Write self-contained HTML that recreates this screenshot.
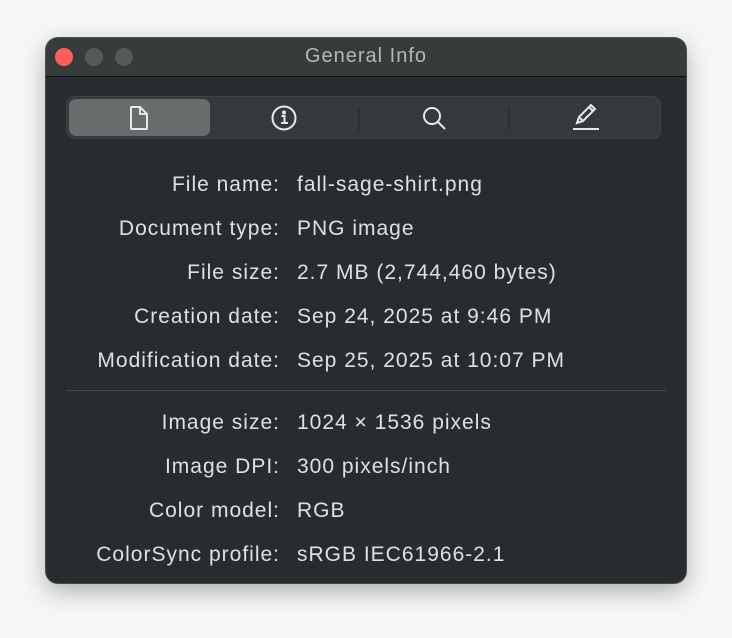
<!DOCTYPE html>
<html><head><style>
body{margin:0;width:732px;height:638px;background:#f6f6f6;font-family:"Liberation Sans",sans-serif;overflow:hidden;position:relative}
.win{position:absolute;left:46px;top:38px;width:640px;height:545px;border-radius:12px;background:#272d2f;box-shadow:0 8px 24px rgba(0,0,0,.3),0 0 0 1px #555b5c;overflow:hidden}
.tb{position:absolute;left:0;top:0;width:640px;height:38px;background:#363b3c;border-bottom:1px solid #0d0f10}
.dot{position:absolute;top:10px;width:18px;height:18px;border-radius:50%;background:#54595a}
.title{position:absolute;left:0;right:0;top:7px;text-align:center;color:#b5b8b8;font-size:20px;letter-spacing:1px}
.seg{position:absolute;left:20px;top:58px;width:593px;height:41px;border-radius:9px;background:#343a3b;border:1px solid #3f4546}
.sel{position:absolute;left:2px;top:2px;width:141px;height:37px;border-radius:7px;background:#676c6c}
.sep{position:absolute;top:11px;width:2px;height:22px;background:#2a2f30}
.row{position:absolute;left:0;width:640px;font-size:21px;letter-spacing:1px;color:#dfe1e1;height:24px}
.l{position:absolute;right:406px;text-align:right;white-space:nowrap}
.v{position:absolute;left:251px;white-space:nowrap}
svg{position:absolute}
</style></head><body>
<div class="win">
<div class="tb">
<div class="dot" style="left:9px;background:#fe5f57"></div>
<div class="dot" style="left:39px"></div>
<div class="dot" style="left:69px"></div>
<div class="title">General Info</div>
</div>
<div class="seg">
<div class="sel"></div>
<div class="sep" style="left:291px"></div>
<div class="sep" style="left:441px"></div>
<svg style="left:60px;top:8px" width="24" height="26" viewBox="0 0 24 26" fill="none" stroke="#e8e8e8" stroke-width="2"><path d="M4 2h9l7 7v14a1 1 0 0 1-1 1H5a1 1 0 0 1-1-1V3a1 1 0 0 1 1-1z M13 2v7h7"/></svg>
<svg style="left:204px;top:8px" width="26" height="26" viewBox="0 0 26 26" fill="none" stroke="#e8e8e8" stroke-width="2"><circle cx="13" cy="13" r="11.5"/><path d="M10.5 11h3v7M10 18h7"/><circle cx="13" cy="7.5" r="1" fill="#e8e8e8"/></svg>
<svg style="left:354px;top:8px" width="28" height="28" viewBox="0 0 28 28" fill="none" stroke="#e8e8e8" stroke-width="2"><circle cx="11" cy="11" r="8"/><path d="M17 17l7 7"/></svg>
<svg style="left:504px;top:7px" width="30" height="28" viewBox="0 0 30 28" fill="none" stroke="#e8e8e8" stroke-width="2"><path d="M6 19l2-6 12-12 4 4-12 12z M8 13l4 4 M18 3l4 4"/><path d="M2 25h26" stroke-width="2"/></svg>
</div>
<div class="row" style="top:135px"><span class="l">File name:</span><span class="v">fall-sage-shirt.png</span></div>
<div class="row" style="top:179px"><span class="l">Document type:</span><span class="v">PNG image</span></div>
<div class="row" style="top:223px"><span class="l">File size:</span><span class="v">2.7 MB (2,744,460 bytes)</span></div>
<div class="row" style="top:267px"><span class="l">Creation date:</span><span class="v">Sep 24, 2025 at 9:46 PM</span></div>
<div class="row" style="top:311px"><span class="l">Modification date:</span><span class="v">Sep 25, 2025 at 10:07 PM</span></div>
<div style="position:absolute;left:20px;top:352px;width:600px;height:1px;background:#434849"></div>
<div class="row" style="top:373px"><span class="l">Image size:</span><span class="v">1024 × 1536 pixels</span></div>
<div class="row" style="top:417px"><span class="l">Image DPI:</span><span class="v">300 pixels/inch</span></div>
<div class="row" style="top:461px"><span class="l">Color model:</span><span class="v">RGB</span></div>
<div class="row" style="top:505px"><span class="l">ColorSync profile:</span><span class="v">sRGB IEC61966-2.1</span></div>
</div>
</body></html>
